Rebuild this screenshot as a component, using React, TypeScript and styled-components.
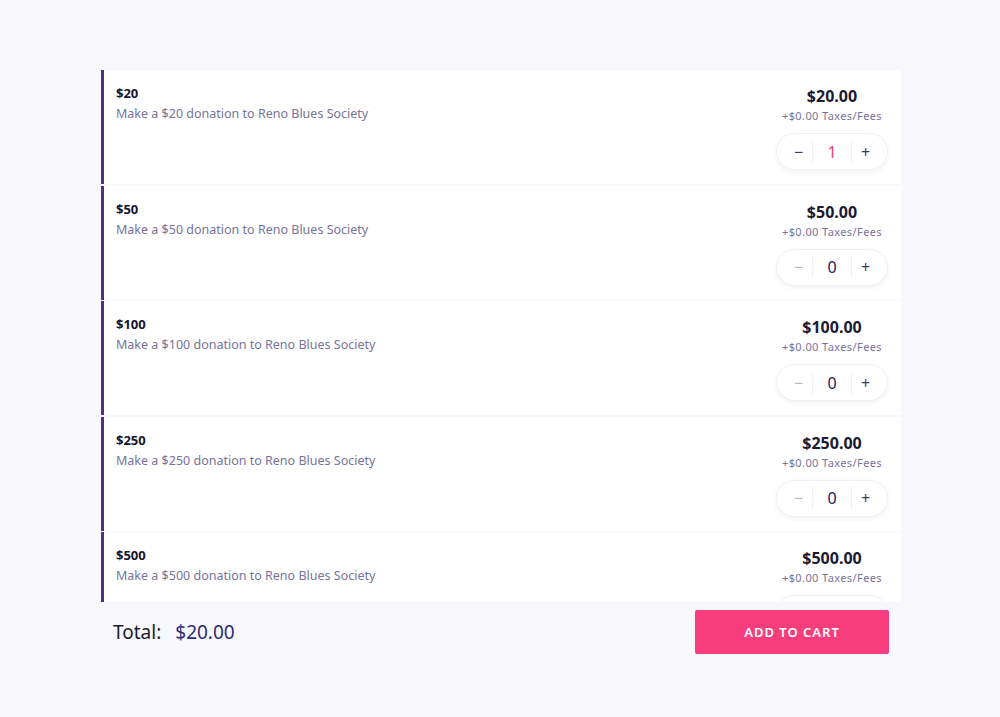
import React, { useState } from 'react';
import styled, { createGlobalStyle } from 'styled-components';

interface Donation {
  id: number;
  amount: number;
}

const donations: Donation[] = [
  { id: 1, amount: 20 },
  { id: 2, amount: 50 },
  { id: 3, amount: 100 },
  { id: 4, amount: 250 },
  { id: 5, amount: 500 },
];

const GlobalStyle = createGlobalStyle`
  html, body {
    margin: 0;
    padding: 0;
    background: #f8f8fc;
    font-family: 'Noto Sans', 'Open Sans', sans-serif;
  }
  * {
    box-sizing: border-box;
  }
`;

const App = (): JSX.Element => {
  const [counts, setCounts] = useState<Record<number, number>>({ 1: 1 });

  const onChange = (id: number, diff: number) => {
    setCounts((prev) => ({ ...prev, [id]: Math.max(0, (prev[id] || 0) + diff) }));
  };

  const total = donations.reduce((sum, d) => sum + d.amount * (counts[d.id] || 0), 0);

  return (
    <Page>
      <GlobalStyle />
      <Wrapper>
        <List>
          {donations.map((d) => {
            const count = counts[d.id] || 0;
            return (
              <Row key={d.id}>
                <Info>
                  <Title>${d.amount}</Title>
                  <Desc>Make a ${d.amount} donation to Reno Blues Society</Desc>
                </Info>
                <PriceBox>
                  <Price>${d.amount.toFixed(2)}</Price>
                  <Fees>+$0.00 Taxes/Fees</Fees>
                  <Stepper>
                    <StepButton disabled={count === 0} onClick={() => onChange(d.id, -1)}>
                      −
                    </StepButton>
                    <Count active={count > 0}>{count}</Count>
                    <StepButton onClick={() => onChange(d.id, 1)}>+</StepButton>
                  </Stepper>
                </PriceBox>
              </Row>
            );
          })}
        </List>
        <Footer>
          <Total>
            Total:<TotalValue>${total.toFixed(2)}</TotalValue>
          </Total>
          <CartButton>ADD TO CART</CartButton>
        </Footer>
      </Wrapper>
    </Page>
  );
};

const Page = styled.div`
  width: 1000px;
  height: 717px;
  padding-top: 70px;
`;

const Wrapper = styled.div`
  width: 800px;
  margin-left: 101px;
`;

const List = styled.div`
  height: 532px;
  overflow: hidden;
  display: flex;
  flex-direction: column;
  gap: 1.5px;
`;

const Row = styled.div`
  flex-shrink: 0;
  display: flex;
  justify-content: space-between;
  height: 114px;
  background: #fff;
  border-left: 3px solid #5a2a7e;
  padding: 15px 13px 0 12px;
`;

const Info = styled.div`
  display: flex;
  flex-direction: column;
`;

const Title = styled.h2`
  margin: 0;
  font-size: 13px;
  font-weight: 700;
  color: #14142b;
  line-height: 16px;
`;

const Desc = styled.p`
  margin: 5px 0 0;
  font-size: 12.5px;
  color: #77739a;
  line-height: 16px;
`;

const PriceBox = styled.div`
  width: 112px;
  display: flex;
  flex-direction: column;
  align-items: center;
  padding-top: 1px;
`;

const Price = styled.div`
  font-size: 16px;
  font-weight: 700;
  color: #1a1a35;
  line-height: 20px;
`;

const Fees = styled.div`
  margin-top: 3px;
  font-size: 11px;
  color: #77739a;
  letter-spacing: 0.4px;
  line-height: 14px;
  white-space: nowrap;
`;

const Stepper = styled.div`
  margin-top: 10px;
  width: 112px;
  height: 37px;
  display: flex;
  align-items: center;
  padding: 0 8px;
  border: 1px solid #f0eff6;
  border-radius: 19px;
  background: #fff;
  box-shadow: 0 2px 5px rgba(40, 40, 90, 0.06);
`;

const StepButton = styled.button`
  flex: 0 0 27px;
  height: 22px;
  border: none;
  background: none;
  padding: 0;
  font-family: inherit;
  font-size: 16px;
  color: #3d3a6b;
  cursor: pointer;
  &:disabled {
    color: #b5b3c8;
    cursor: default;
  }
`;

const Count = styled.div<{ active: boolean }>`
  flex: 1;
  text-align: center;
  font-size: 16px;
  line-height: 22px;
  color: ${(props) => (props.active ? '#f23d7a' : '#24235a')};
  border-left: 1px solid #f0eff5;
  border-right: 1px solid #f0eff5;
`;

const Footer = styled.div`
  display: flex;
  justify-content: space-between;
  align-items: center;
  padding: 8px 12px;
`;

const Total = styled.div`
  font-size: 19px;
  color: #1c1c2e;
  display: flex;
  gap: 14px;
`;

const TotalValue = styled.span`
  color: #2e2b78;
`;

const CartButton = styled.button`
  width: 194px;
  height: 44px;
  border: none;
  border-radius: 2px;
  background: #f73d7b;
  color: #fff;
  font-family: inherit;
  font-size: 13px;
  font-weight: 600;
  letter-spacing: 1px;
  cursor: pointer;
`;

export default App;
